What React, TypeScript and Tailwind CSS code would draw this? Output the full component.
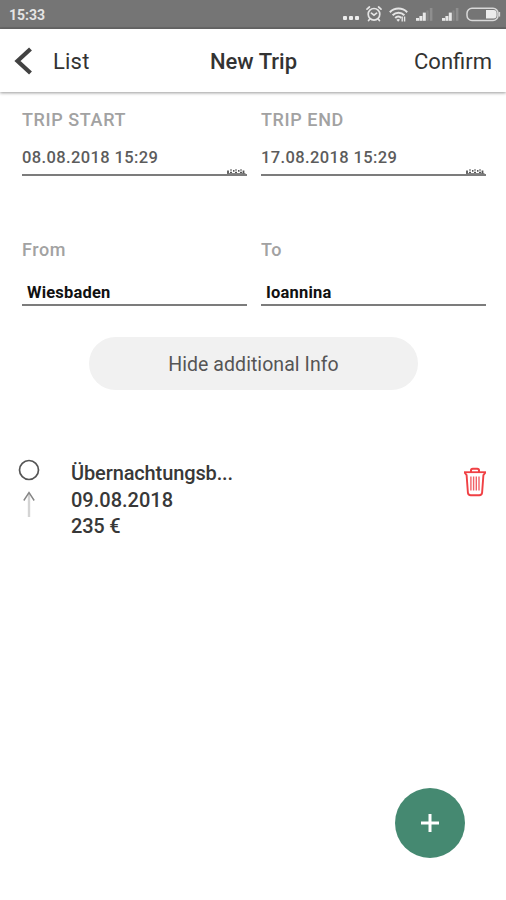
import React from 'react';

interface Expense {
  id: number;
  title: string;
  date: string;
  amount: string;
}

const expenses: Expense[] = [
  { id: 1, title: 'Übernachtungsb...', date: '09.08.2018', amount: '235 €' },
];

function AlarmIcon() {
  return (
    <svg width="16" height="16" viewBox="0 0 16 16" fill="none" stroke="#e4e4e4" strokeWidth="1.7" strokeLinecap="round">
      <circle cx="8" cy="8.3" r="5.8" />
      <path d="M1 3.2 3.4 1M15 3.2 12.6 1M5.4 7.2 8 9.2l2.6-2M3.8 13l-1.2 1.6M12.2 13l1.2 1.6" />
    </svg>
  );
}

function WifiIcon() {
  return (
    <svg width="19" height="15" viewBox="0 0 19 15" fill="none" stroke="#e4e4e4" strokeWidth="2">
      <path d="M.8 5.2C5.8.4 13.2.4 18.2 5.2" />
      <path d="M3.6 8.2C7 4.8 12 4.8 15.4 8.2" />
      <path d="M6.2 11c1.9-1.9 4.3-1.9 6 0" />
      <path d="M9.2 14.8 7.4 12.8q1.800-1.400 3.600 0z" fill="#e4e4e4" stroke="none" />
      <path d="M13.2 9.6v5M15.600 9.600v5" strokeWidth="1.4" />
    </svg>
  );
}

function SignalIcon() {
  return (
    <svg width="17" height="13" viewBox="0 0 17 13" fill="#e8e8e8">
      <rect x="0" y="10" width="3" height="2.8" />
      <rect x="3.4" y="8" width="3" height="4.8" />
      <rect x="6.8" y="4.6" width="3" height="8.2" />
      <rect x="10.4" y="2.4" width="2.2" height="10.4" fill="#868686" />
      <rect x="13.8" y="0" width="2.6" height="12.8" fill="#8e8e8e" />
    </svg>
  );
}

function BatteryIcon() {
  return (
    <svg width="35" height="15" viewBox="0 0 35 15" fill="none">
      <rect x="1" y="1.2" width="31" height="12.2" rx="5" stroke="#d8d8d8" strokeWidth="1.5" />
      <path d="M20 3h7.6q3 0 3 3v2.6q0 3-3 3H20z" fill="#ececec" />
      <path d="M33.4 5v4.6" stroke="#d8d8d8" strokeWidth="1.5" />
    </svg>
  );
}

// only the top edge of the calendar is visible above the underline
function CalendarEdge() {
  return (
    <svg width="20" height="6" viewBox="0 0 20 6" fill="none" stroke="#555">
      <path d="M2 5.5V2.5M7 2.8h1.5M12 2.8h1.500M17.500 2.500v3" strokeWidth="1.8" />
      <path d="M5 1v2M10 1v2M15 1v2" strokeWidth="1" />
      <path d="M4 4.400h2M9 4.400h2M14 4.400h2" strokeWidth="1.200" />
      <path d="M1 5.600h18.500" strokeWidth=".8" />
    </svg>
  );
}

function TrashIcon() {
  return (
    <svg width="24" height="30" viewBox="0 0 24 30" fill="none" stroke="#f04044">
      <path d="M8 5V3.6q0-1.8 1.8-1.8h4.4q1.8 0 1.8 1.8V5" strokeWidth="2" />
      <path d="M1 5.2h22" strokeWidth="1.8" />
      <path d="M1.6 5.5 3.6 8.2 4.9 25.6q.2 2.6 2.8 2.6h8.600q2.600 0 2.800-2.600L20.400 8.200l2-2.700" strokeWidth="1.9" />
      <path d="M7.9 9.5v14M10.6 9.5v14M13.3 9.5v14M16 9.5v14" strokeWidth="1.4" stroke="#f26266" />
    </svg>
  );
}

function DateField({ label, value }: { label: string; value: string }) {
  return (
    <div className="w-[225px] shrink-0">
      <p className="text-[18px] leading-6 font-medium tracking-[0.6px] text-[#a2a2a2]">{label}</p>
      <div className="mt-3.5 flex h-[30px] justify-between border-b-2 border-[#7c7c7c]">
        <span className="text-[16.5px] leading-6 font-medium tracking-[0.38px] text-[#5c5c5c]">{value}</span>
        <span className="mr-px self-end"><CalendarEdge /></span>
      </div>
    </div>
  );
}

function PlaceField({ label, value }: { label: string; value: string }) {
  return (
    <div className="w-[225px] shrink-0">
      <p className="text-[18px] leading-6 font-medium tracking-[0.6px] text-[#a2a2a2]">{label}</p>
      <div className="mt-[19px] h-[25px] border-b-2 border-[#7c7c7c] pl-[5px]">
        <span className="block text-[16.5px] leading-6 font-bold tracking-[0.2px] text-[#111]">{value}</span>
      </div>
    </div>
  );
}

export default function App() {
  return (
    <div className="relative flex h-[900px] w-[506px] flex-col overflow-hidden bg-white font-['Roboto',sans-serif]">
      <div className="flex h-[29px] shrink-0 items-center justify-between border-b-2 border-[#686868] bg-[#757575] pr-[5px] pl-[9px]">
        <span className="pt-1 text-[14px] font-bold text-[#e4e4e4]">15:33</span>
        <div className="flex items-center pt-px">
          <div className="mt-2 mr-[7px] flex gap-[2px]">
            <span className="size-1 rounded-[1px] bg-[#ececec]" />
            <span className="size-1 rounded-[1px] bg-[#ececec]" />
            <span className="size-1 rounded-[1px] bg-[#ececec]" />
          </div>
          <AlarmIcon />
          <span className="ml-[7px]"><WifiIcon /></span>
          <span className="ml-[8px]"><SignalIcon /></span>
          <span className="ml-[9px]"><SignalIcon /></span>
          <span className="ml-[7px]"><BatteryIcon /></span>
        </div>
      </div>

      <header className="grid h-[63px] shrink-0 grid-cols-3 items-center pr-[14px] pl-[14px] text-[22px] text-[#333] shadow-[0_1px_3px_rgba(0,0,0,0.4)]">
        <button className="flex items-center text-left">
          <svg width="19" height="28" viewBox="0 0 19 28" fill="none" stroke="#424242" strokeWidth="4.2">
            <path d="M16.5 2 3.5 14l13 12" />
          </svg>
          <span className="ml-5 pt-px tracking-[0.2px]">List</span>
        </button>
        <h1 className="pt-px pl-px text-center font-medium">New Trip</h1>
        <button className="pt-px text-right">Confirm</button>
      </header>

      <main className="pt-4 pr-5 pl-[22px]">
        <div className="flex gap-[14px]">
          <DateField label="TRIP START" value="08.08.2018 15:29" />
          <DateField label="TRIP END" value="17.08.2018 15:29" />
        </div>
        <div className="mt-[62px] flex gap-[14px]">
          <PlaceField label="From" value="Wiesbaden" />
          <PlaceField label="To" value="Ioannina" />
        </div>
        <button className="mt-[31px] ml-[67px] block h-[53px] w-[329px] rounded-full bg-[#f1f1f1] pt-0.5 text-[19.5px] tracking-[0.06px] text-[#555]">
          Hide additional Info
        </button>

        {expenses.map((expense) => (
          <div key={expense.id} className="mt-[69px] flex items-start">
            <div className="-ml-1 flex w-[22px] flex-col items-center">
              <svg width="22" height="22" viewBox="0 0 22 22" fill="none" stroke="#555" strokeWidth="1.7">
                <circle cx="11" cy="11" r="9.5" />
              </svg>
              <svg className="mt-2.5" width="14" height="28" viewBox="0 0 14 28" fill="none">
                <path d="M7 2v24" stroke="#d4d4d4" strokeWidth="2.4" />
                <path d="M1.8 9.5 7 1.5l5.2 8" stroke="#858585" strokeWidth="1.4" />
              </svg>
            </div>
            <div className="mt-px ml-[31px] text-[20px] leading-[26.5px] font-medium text-[#383838]">
              <p className="tracking-[-0.12px]">{expense.title}</p>
              <p>{expense.date}</p>
              <p className="tracking-[-0.2px]">{expense.amount}</p>
            </div>
            <button className="mt-2 -mr-px ml-auto"><TrashIcon /></button>
          </div>
        ))}
      </main>

      <button className="absolute right-[41px] bottom-[42px] flex size-[70px] items-center justify-center rounded-full bg-[#458971]">
        <svg width="18" height="18" viewBox="0 0 18 18" stroke="#fff" strokeWidth="3">
          <path d="M9 0v18M0 9h18" />
        </svg>
      </button>
    </div>
  );
}
